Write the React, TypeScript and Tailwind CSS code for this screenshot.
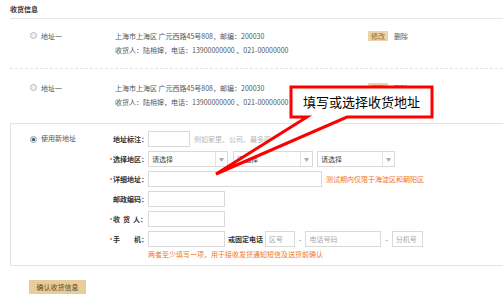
import React from 'react'

const font = { fontFamily: '"Noto Sans CJK SC", "Noto Sans", sans-serif' }

function Radio({ checked }: { checked?: boolean }) {
  return checked ? (
    <span className="inline-flex w-[7px] h-[7px] rounded-full border border-[#9aa3ad] bg-[#dfe4ea] items-center justify-center">
      <span className="w-[3px] h-[3px] rounded-full bg-[#1f4a7a]" />
    </span>
  ) : (
    <span className="inline-block w-[7px] h-[7px] rounded-full border border-[#b9b9b9] bg-[#f1f1f1]" />
  )
}

function AddressRow({ last }: { last?: boolean }) {
  return (
    <div
      className={
        'ml-[10px] flex text-[7px] leading-[14px] text-[#555] ' +
        (last ? 'pt-[12px]' : 'pt-[10px] pb-[11px] border-b border-dashed border-[#e2e2e2]')
      }
    >
      <div className="w-[105px] flex items-start pl-[20px] pt-[3px] gap-[4px]">
        <Radio />
        <span className="-mt-[3px]">地址一</span>
      </div>
      <div className="w-[253px] whitespace-nowrap">
        <div>上海市上海区 广元西路45号808，邮编：200030</div>
        <div>收货人：陆枏婶，电话：13900000000 、021-00000000</div>
      </div>
      <div className="flex items-start gap-[6px] pt-[2px]">
        <span className="bg-[#eed4a4] text-[#8a6a3a] px-[3px] leading-[10px]">修改</span>
        <span className="leading-[10px]">删除</span>
      </div>
    </div>
  )
}

function Label({ children, req }: { children: React.ReactNode; req?: boolean }) {
  return (
    <div className="relative w-[35px] whitespace-nowrap text-[#333] font-bold leading-[16px] flex">
      {req && <span className="absolute -left-[3px] top-[7px] w-[2px] h-[2px] rounded-full bg-[#f07020]" />}
      {children}
    </div>
  )
}

function Input({ w, ph }: { w: string; ph?: string }) {
  return (
    <div className={'h-[16px] border border-[#d9d9d9] bg-white text-[#aaa] px-[3px] leading-[14px] whitespace-nowrap ' + w}>
      {ph}
    </div>
  )
}

function Select({ w }: { w: string }) {
  return (
    <div className={'h-[16px] border border-[#d9d9d9] bg-white flex ' + w}>
      <div className="flex-1 px-[3px] leading-[14px] text-[#444] whitespace-nowrap">请选择</div>
      <div className="w-[12px] border-l border-[#e2e2e2] flex items-center justify-center text-[#aaa] text-[5px]">▼</div>
    </div>
  )
}

export default function App() {
  return (
    <div className="relative w-[503px] h-[301px] overflow-hidden bg-white" style={font}>
      <div className="ml-[10px] h-[19px] border-b border-[#e6e6e6] text-[7px] font-bold text-[#333] leading-[19px]">
        收货信息
      </div>

      <AddressRow />
      <AddressRow last />

      <div className="mt-[14px] ml-[10px] h-[143px] border-l border-t border-b border-[#e4e4e4] flex text-[7px]">
        <div className="w-[102px] shrink-0 pl-[19px] pt-[12px] flex items-start gap-[4px]">
          <Radio checked />
          <span className="-mt-[3px] text-[#555] whitespace-nowrap">使用新地址</span>
        </div>
        <div className="pt-[7px] flex flex-col gap-[4px] whitespace-nowrap">
          <div className="flex items-center">
            <Label>地址标注：</Label>
            <Input w="w-[42px]" />
            <span className="ml-[4px] text-[#b5b5b5]">例如家里、公司。最多四个字</span>
          </div>
          <div className="flex items-center">
            <Label req>选择地区：</Label>
            <Select w="w-[80px]" />
            <div className="ml-[5px]">
              <Select w="w-[80px]" />
            </div>
            <div className="ml-[4px]">
              <Select w="w-[78px]" />
            </div>
          </div>
          <div className="flex items-center">
            <Label req>详细地址：</Label>
            <Input w="w-[174px]" />
            <span className="ml-[4px] text-[#ee7722]">测试期内仅限于海淀区和朝阳区</span>
          </div>
          <div className="flex items-center">
            <Label>邮政编码：</Label>
            <Input w="w-[77px]" />
          </div>
          <div className="flex items-center">
            <Label req>
              <span>收</span>
              <span className="ml-[3px]">货</span>
              <span className="ml-[3px]">人：</span>
            </Label>
            <Input w="w-[77px]" />
          </div>
          <div className="flex items-center">
            <Label req>
              <span>手</span>
              <span className="ml-[14px]">机：</span>
            </Label>
            <Input w="w-[77px]" />
            <span className="ml-[3px] font-bold text-[#333]">或固定电话</span>
            <div className="ml-[2px]">
              <Input w="w-[30px]" ph="区号" />
            </div>
            <span className="mx-[4px] text-[#666]">-</span>
            <Input w="w-[76px]" ph="电话号码" />
            <span className="mx-[4px] text-[#666]">-</span>
            <Input w="w-[31px]" ph="分机号" />
          </div>
          <div className="ml-[35px] -mt-[2px] text-[#ee7722]">两者至少填写一项，用于接收发货通知短信及送货前确认</div>
        </div>
      </div>

      <div className="ml-[29px] mt-[14px] w-[57px] h-[14px] bg-[#e8cd9c] text-[7px] leading-[14px] text-center text-[#5a4525]">
        确认收货信息
      </div>

      <svg className="absolute left-0 top-0 pointer-events-none" width="503" height="301">
        <polygon
          points="291,87 432,87 432,117 347,117 216,174 307,117 291,117"
          fill="#fff"
          stroke="#ff0000"
          strokeWidth="3"
          strokeLinejoin="miter"
        />
      </svg>
      <div className="absolute left-[303px] top-[92px] text-[13px] leading-[20px] text-black">
        填写或选择收货地址
      </div>
    </div>
  )
}
